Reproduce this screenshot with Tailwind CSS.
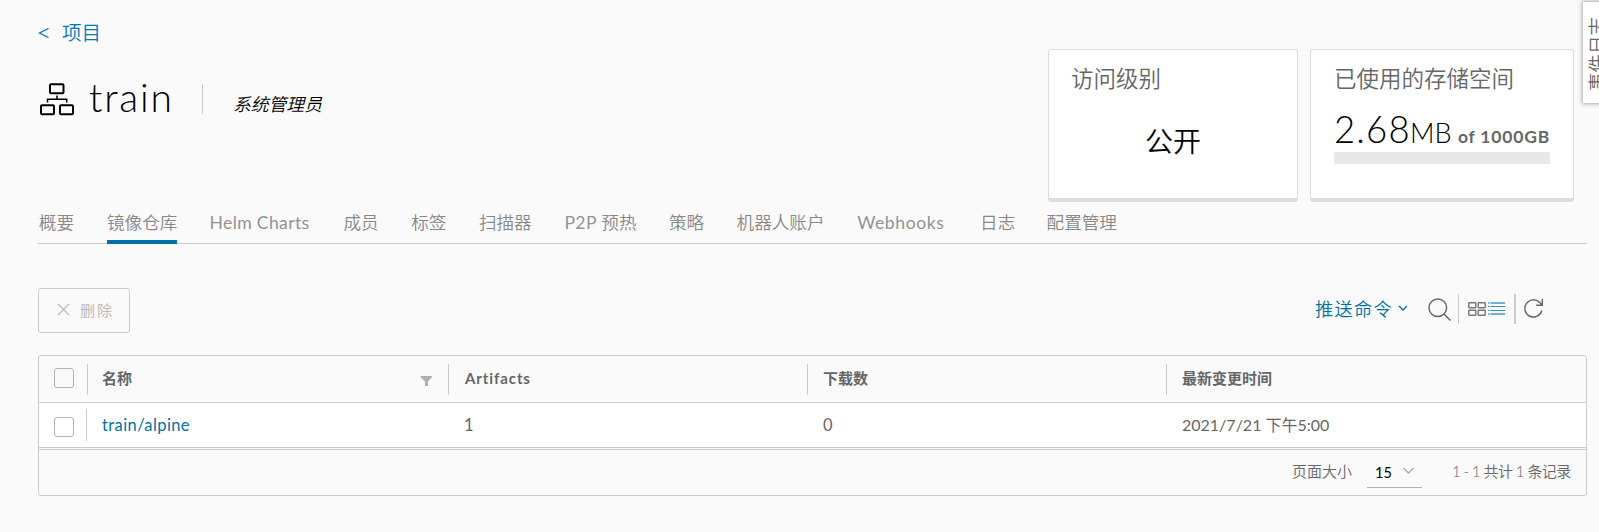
<!DOCTYPE html>
<html lang="zh-CN">
<head>
<meta charset="utf-8">
<title>train</title>
<script src="https://cdn.jsdelivr.net/npm/@tailwindcss/browser@4"></script>
</head>
<body class="relative h-[532px] w-[1599px] overflow-hidden bg-[#fafafa] pl-[38px] font-['Lato','Noto_Sans_CJK_SC',sans-serif] text-[#666] font-normal whitespace-nowrap">
  <header class="flex h-[204px] justify-between pr-[25px]">
    <div class="pt-[18px]">
      <a class="flex h-[30px] items-center text-[19.5px] font-[350] text-[#0079b8]"><svg class="mr-[13px] h-[10px] w-[11px]" viewBox="0 0 11 10" fill="none" stroke="#0079b8" stroke-width="1.300"><path d="M10.500.5L1.500 5l9 4.500"/></svg>项目</a>
      <div class="mt-[25px] flex h-[50px] items-center">
        <svg class="ml-[2px] mt-[3px] h-[33px] w-[35px]" viewBox="0 0 35 33" fill="none" stroke="#000" stroke-width="2"><rect x="10" y="1.200" width="13.500" height="9" rx="1"/><rect x="1" y="22.200" width="13" height="9" rx="1"/><rect x="20" y="22.200" width="13" height="9" rx="1"/><path d="M17 12.500v3.500M7.500 19.500V16.200h19.200v3.300" stroke-width="1.500"/></svg>
        <h1 class="ml-[14px] mb-[2px] w-[99px] text-[39px] leading-[48px] font-light tracking-[1.800px] text-black">train</h1>
        <div class="ml-[14px] mt-[2px] h-[30px] w-px bg-[#ccc]"></div>
        <em class="ml-[30px] mt-[12px] text-[17.800px] font-[350] text-black">系统管理员</em>
      </div>
    </div>
    <div class="flex gap-[12px] pt-[49px]">
      <section class="h-[153px] w-[250px] rounded-[3px] border border-b-4 border-[#ddd] bg-white px-[22px] pt-[14px]">
        <h2 class="text-[22.500px] leading-[30px] font-[350]">访问级别</h2>
        <p class="mt-[28px] text-center text-[28px] leading-[38px] font-[350] text-black">公开</p>
      </section>
      <section class="h-[153px] w-[264px] rounded-[3px] border border-b-4 border-[#ddd] bg-white px-[23px] pt-[14px]">
        <h2 class="text-[22.500px] leading-[30px] font-[350]">已使用的存储空间</h2>
        <p class="mt-[13px] flex h-[45px] items-baseline leading-[45px] text-black"><span class="w-[76px] text-[36.500px] font-light tracking-[1.200px]">2.68</span><span class="w-[48px] text-[27px] font-light">MB</span><span class="text-[17.500px] font-bold tracking-[.800px] text-[#666]">of 1000GB</span></p>
        <div class="h-[12px] w-[216px] bg-[#e8e8e8]"></div>
      </section>
    </div>
  </header>
  <aside class="absolute left-[1583px] top-[2px] h-[101px] w-[40px] bg-white pl-[4px] shadow-[0_0_4px_1px_#aaa]">
    <span class="block h-[89px] w-[20px] rotate-180 text-[18.500px] leading-[20px] font-[350] [text-orientation:sideways] [writing-mode:vertical-rl]">事件日志</span>
  </aside>
  <nav class="flex h-[40px] w-[1549px] gap-[32.500px] border-b border-[#ccc] text-[17.600px] leading-[38px] font-[350] text-[#888]">
    <a class="w-[36.500px] pl-[.800px]">概要</a>
    <a class="h-[40px] w-[70px] border-b-4 border-[#0072a3]">镜像仓库</a>
    <a class="w-[101.500px] font-normal tracking-[.350px] text-[#939393]">Helm Charts</a>
    <a class="w-[35.200px]">成员</a>
    <a class="w-[35.200px]">标签</a>
    <a class="w-[53px]">扫描器</a>
    <a class="w-[72px]"><span class="font-normal tracking-[.400px] text-[#939393]">P2P </span>预热</a>
    <a class="w-[35.200px]">策略</a>
    <a class="w-[88.200px]">机器人账户</a>
    <a class="w-[90.300px] font-normal tracking-[.550px] text-[#939393]">Webhooks</a>
    <a class="w-[34px]">日志</a>
    <a>配置管理</a>
  </nav>
  <div class="mt-[44px] flex h-[45px] w-[1549px] justify-between">
    <button class="flex h-[45px] w-[92px] items-center rounded-[3px] border border-[#ccc] pl-[18px] text-[15px] tracking-[2px] text-[#bbb]">
      <svg class="mr-[10px] mb-[2px] h-[13px] w-[13px]" viewBox="0 0 13 13" stroke="#bbb" stroke-width="1.200"><path d="M1 1l11 11M12 1L1 12"/></svg>删除</button>
    <div class="flex h-[42px] items-center pr-[43px]">
      <a class="mt-[1px] text-[18.300px] font-[350] tracking-[1.200px] text-[#0072a3]">推送命令</a>
      <svg class="ml-[5px] mb-[2px] h-[6px] w-[10px]" viewBox="0 0 10 6" fill="none" stroke="#0072a3" stroke-width="1.300"><path d="M1 1l4 4 4-4"/></svg>
      <svg class="ml-[20px] mt-[1px] h-[24px] w-[24px]" viewBox="0 0 24 24" fill="none" stroke="#666" stroke-width="1.500"><circle cx="9.800" cy="9.800" r="8.800"/><path d="M16 16l6.500 6.500"/></svg>
      <div class="ml-[6px] h-[30px] w-px bg-[#ccc]"></div>
      <svg class="ml-[9px] mb-[1px] h-[16px] w-[18px]" viewBox="0 0 18 16" fill="none" stroke="#777" stroke-width="1.400"><rect x=".8" y="1.800" width="7" height="5" rx=".5"/><rect x="10.200" y="1.800" width="7" height="5" rx=".5"/><rect x=".8" y="9.200" width="7" height="5" rx=".5"/><rect x="10.200" y="9.200" width="7" height="5" rx=".5"/></svg>
      <svg class="ml-[2px] mb-[1px] h-[13px] w-[17px]" viewBox="0 0 17 13"><path d="M0 1h1.500M2.500 1H17M0 12h1.500M2.500 12H17" stroke="#6cb2dc" stroke-width="2"/><path d="M0 4.500h1.500M2.500 4.500H17M0 8.500h1.500M2.500 8.500H17" stroke="#2b8fc6" stroke-width="1.200"/></svg>
      <div class="ml-[9px] h-[30px] w-[2px] bg-[#ccc]"></div>
      <svg class="ml-[8px] mb-[2px] h-[20px] w-[20px]" viewBox="0 0 20 20" fill="none" stroke="#666" stroke-width="1.400"><path d="M17.800 12.500A8.600 8.600 0 1 1 15.500 4.300L18 6.700M18.300 1v6.200h-6.200"/></svg>
    </div>
  </div>
  <main class="mt-[22px] h-[141px] w-[1549px] rounded-[3px] border border-[#ccc]">
    <div class="flex h-[47px] items-center border-b border-[#ccc] text-[15px] leading-[22px] font-bold">
      <div class="ml-[15px] h-[20px] w-[20px] -translate-y-px rounded-[3px] border border-[#b3b3b3]"></div>
      <div class="ml-[13px] h-[31px] w-px bg-[#ccc]"></div>
      <div class="flex w-[360px] items-center justify-between pl-[14px] pr-[15px]"><span class="mb-[2px]">名称</span><svg class="mt-[4px] h-[11px] w-[13px]" viewBox="0 0 13 11" fill="#b0b0b0"><path d="M.5 0h11.500v1L8 5.500V10H5V5.500L.5 1z"/></svg></div>
      <div class="h-[31px] w-px bg-[#ccc]"></div>
      <span class="mb-[2px] w-[358px] pl-[16px] tracking-[.900px]">Artifacts</span>
      <div class="h-[31px] w-px bg-[#ccc]"></div>
      <span class="mb-[2px] w-[358px] pl-[15px]">下载数</span>
      <div class="h-[31px] w-px bg-[#ccc]"></div>
      <span class="mb-[2px] pl-[15px]">最新变更时间</span>
    </div>
    <div class="flex h-[45px] items-center border-b border-[#ccc] bg-white text-[16.500px]">
      <div class="ml-[15px] mt-[4px] h-[20px] w-[20px] rounded-[3px] border border-[#b3b3b3]"></div>
      <div class="ml-[12px] h-[32px] w-px bg-[#ccc]"></div>
      <a class="w-[377px] pl-[15px] tracking-[.400px] text-[#0072a3]">train/alpine</a>
      <span class="w-[359px]">1</span>
      <span class="w-[359px]">0</span>
      <span class="text-[16px]">2021/7/21 下午5:00</span>
    </div>
    <footer class="mt-px flex h-[45px] items-center justify-end border-t border-[#ccc] pr-[15px] text-[15px] leading-[22px] font-[350]">
      <span class="mb-[2px]">页面大小</span>
      <div class="ml-[15px] mt-[1px] flex h-[31px] w-[55px] items-center justify-between border-b border-[#b3b3b3] pl-[8px] pr-[8px] font-normal text-black"><span class="mt-[2px] text-[14.500px]">15</span><svg class="mb-[3px] h-[7px] w-[11px]" viewBox="0 0 11 7" fill="none" stroke="#aaa" stroke-width="1.300"><path d="M.5 1l5 5 5-5"/></svg></div>
      <span class="mb-[2px] ml-[30px] w-[119px] tracking-[-.600px]">1 - 1 共计 1 条记录</span>
    </footer>
  </main>
</body>
</html>
